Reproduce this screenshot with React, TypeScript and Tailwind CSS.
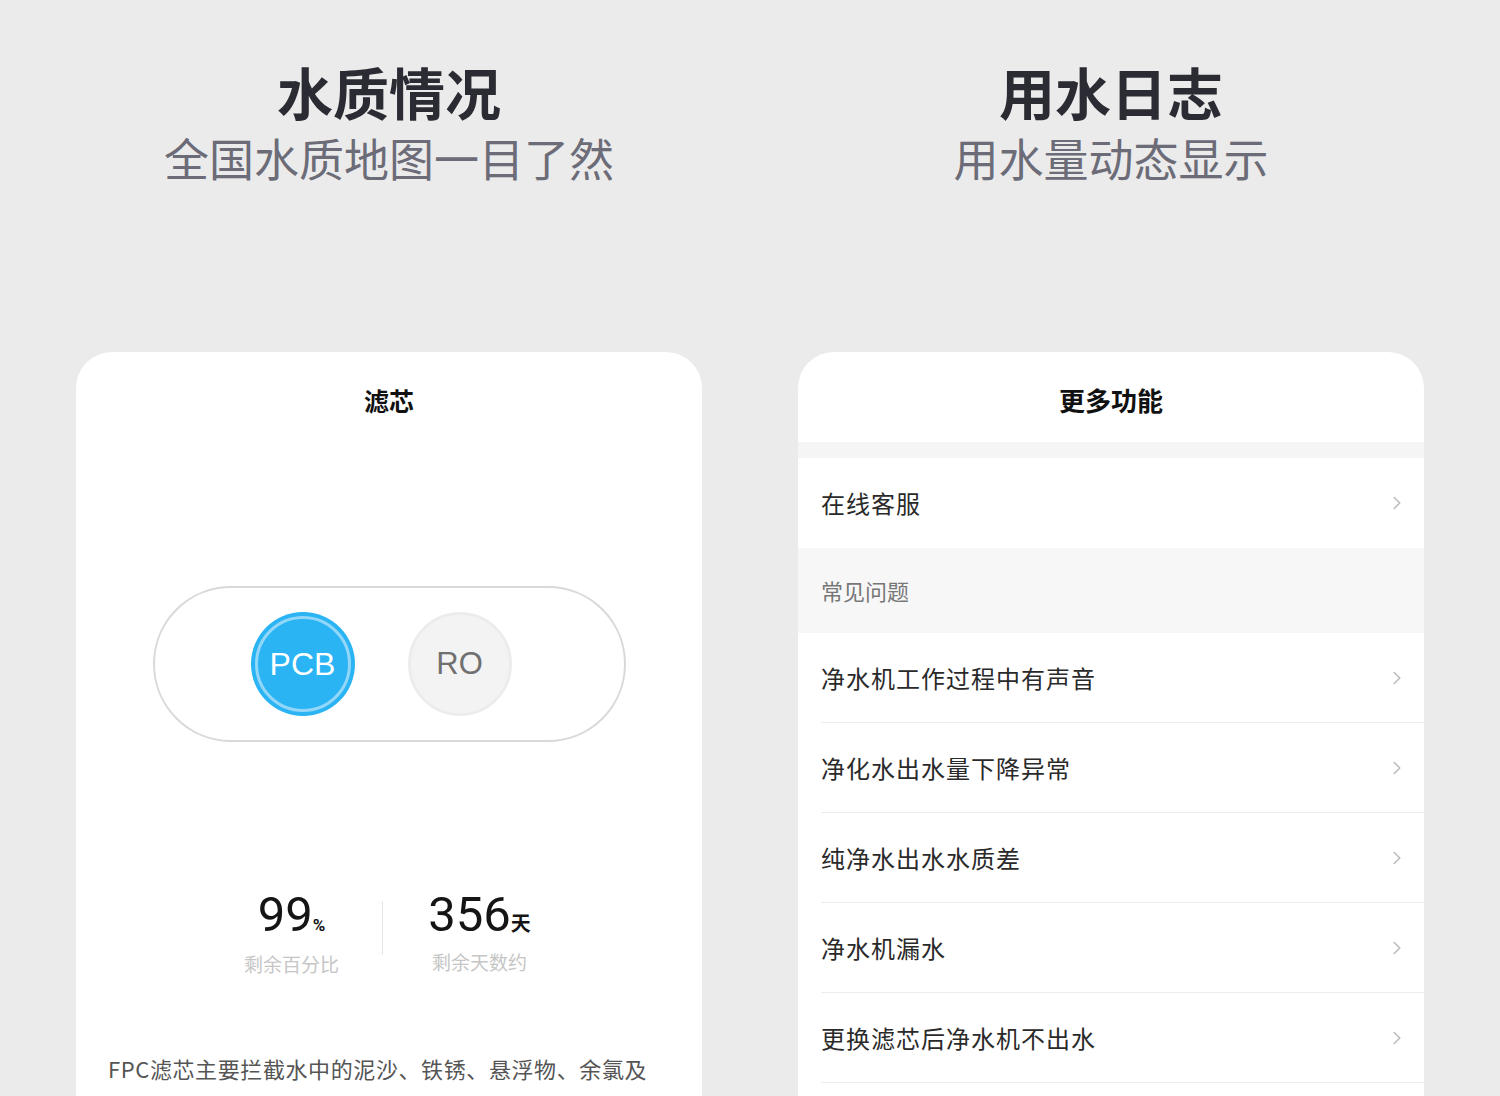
import { ChevronRight } from "lucide-react";

const cjk = "font-['Noto_Sans_CJK_SC','Noto_Sans',sans-serif]";

function Header({ title, subtitle }: { title: string; subtitle: string }) {
  return (
    <div className="flex flex-col items-center pt-[63px]">
      <h1 className="text-[56px] leading-[56px] font-bold text-[#2b2b33]">{title}</h1>
      <p className="mt-[14px] text-[45px] leading-[50px] text-[#6c6c78]">{subtitle}</p>
    </div>
  );
}

function FilterCard() {
  return (
    <div className="mt-[169px] h-[800px] rounded-[36px] bg-white pt-[32px]">
      <h2 className="text-center text-[25px] leading-[32px] font-bold text-[#111]">滤芯</h2>

      <div className="mx-auto mt-[170px] flex h-[156px] w-[473px] items-center justify-center gap-[53px] rounded-full border-2 border-[#d9d9d9] pr-[16px]">
        <div className="h-[104px] w-[104px] rounded-full bg-[#2ab4f4] p-[4px]">
          <div className="flex h-full w-full items-center justify-center rounded-full border-[3px] border-[#93d7f8]">
            <span className="font-['Liberation_Sans',sans-serif] text-[32px] text-white">PCB</span>
          </div>
        </div>
        <div className="flex h-[104px] w-[104px] items-center justify-center rounded-full border-[3px] border-[#ececec] bg-[#f3f3f3]">
          <span className="font-['Liberation_Sans',sans-serif] text-[31px] text-[#707070]">RO</span>
        </div>
      </div>

      <div className="mt-[143px] flex justify-center">
        <div className="w-[180px] text-center">
          <div className="font-['Roboto',sans-serif] text-[49px] leading-[60px] text-[#151515]">
            99<span className="text-[17px] font-bold">%</span>
          </div>
          <div className="mt-[-3px] text-[19px] leading-[24px] text-[#c6c6c6]">剩余百分比</div>
        </div>
        <div className="mt-[16px] h-[54px] w-px bg-[#e6e6e6]" />
        <div className="w-[194px] text-center">
          <div className="font-['Roboto',sans-serif] text-[49px] leading-[60px] text-[#151515]">
            356<span className={`${cjk} text-[20px] font-bold`}>天</span>
          </div>
          <div className="mt-[-3px] text-[19px] leading-[24px] text-[#c6c6c6]">剩余天数约</div>
        </div>
      </div>

      <p className="mt-[77px] pl-[32px] text-[22px] leading-[30px] tracking-[0.6px] text-[#555]">
        FPC滤芯主要拦截水中的泥沙、铁锈、悬浮物、余氯及
      </p>
    </div>
  );
}

const faqs = [
  "净水机工作过程中有声音",
  "净化水出水量下降异常",
  "纯净水出水水质差",
  "净水机漏水",
  "更换滤芯后净水机不出水",
];

function Row({ label }: { label: string }) {
  return (
    <div className="flex h-[90px] items-center justify-between border-b border-[#ececec] pr-[16px]">
      <span className="text-[24px] tracking-[1px] text-[#2a2a2a]">{label}</span>
      <ChevronRight className="h-[22px] w-[22px] text-[#bdbdbd]" strokeWidth={1.75} />
    </div>
  );
}

function MoreCard() {
  return (
    <div className="mt-[169px] h-[800px] overflow-hidden rounded-[36px] bg-white pt-[32px]">
      <h2 className="text-center text-[26px] leading-[32px] font-bold text-[#111]">更多功能</h2>
      <div className="mt-[26px] h-[16px] bg-[#f5f5f5]" />
      <div className="flex h-[90px] items-center justify-between pl-[23px] pr-[16px]">
        <span className="text-[24px] tracking-[1px] text-[#2a2a2a]">在线客服</span>
        <ChevronRight className="h-[22px] w-[22px] text-[#bdbdbd]" strokeWidth={1.75} />
      </div>
      <div className="flex h-[85px] items-center bg-[#f7f7f7] pl-[23px]">
        <span className="text-[22px] text-[#777]">常见问题</span>
      </div>
      <div className="pl-[23px]">
        {faqs.map((f) => (
          <Row key={f} label={f} />
        ))}
      </div>
    </div>
  );
}

export default function App() {
  return (
    <div className={`h-[1096px] w-[1500px] overflow-hidden bg-[#ebebeb] ${cjk}`}>
      <div className="grid grid-cols-[626px_626px] gap-x-[96px] pl-[76px]">
        <div>
          <Header title="水质情况" subtitle="全国水质地图一目了然" />
          <FilterCard />
        </div>
        <div>
          <Header title="用水日志" subtitle="用水量动态显示" />
          <MoreCard />
        </div>
      </div>
    </div>
  );
}
